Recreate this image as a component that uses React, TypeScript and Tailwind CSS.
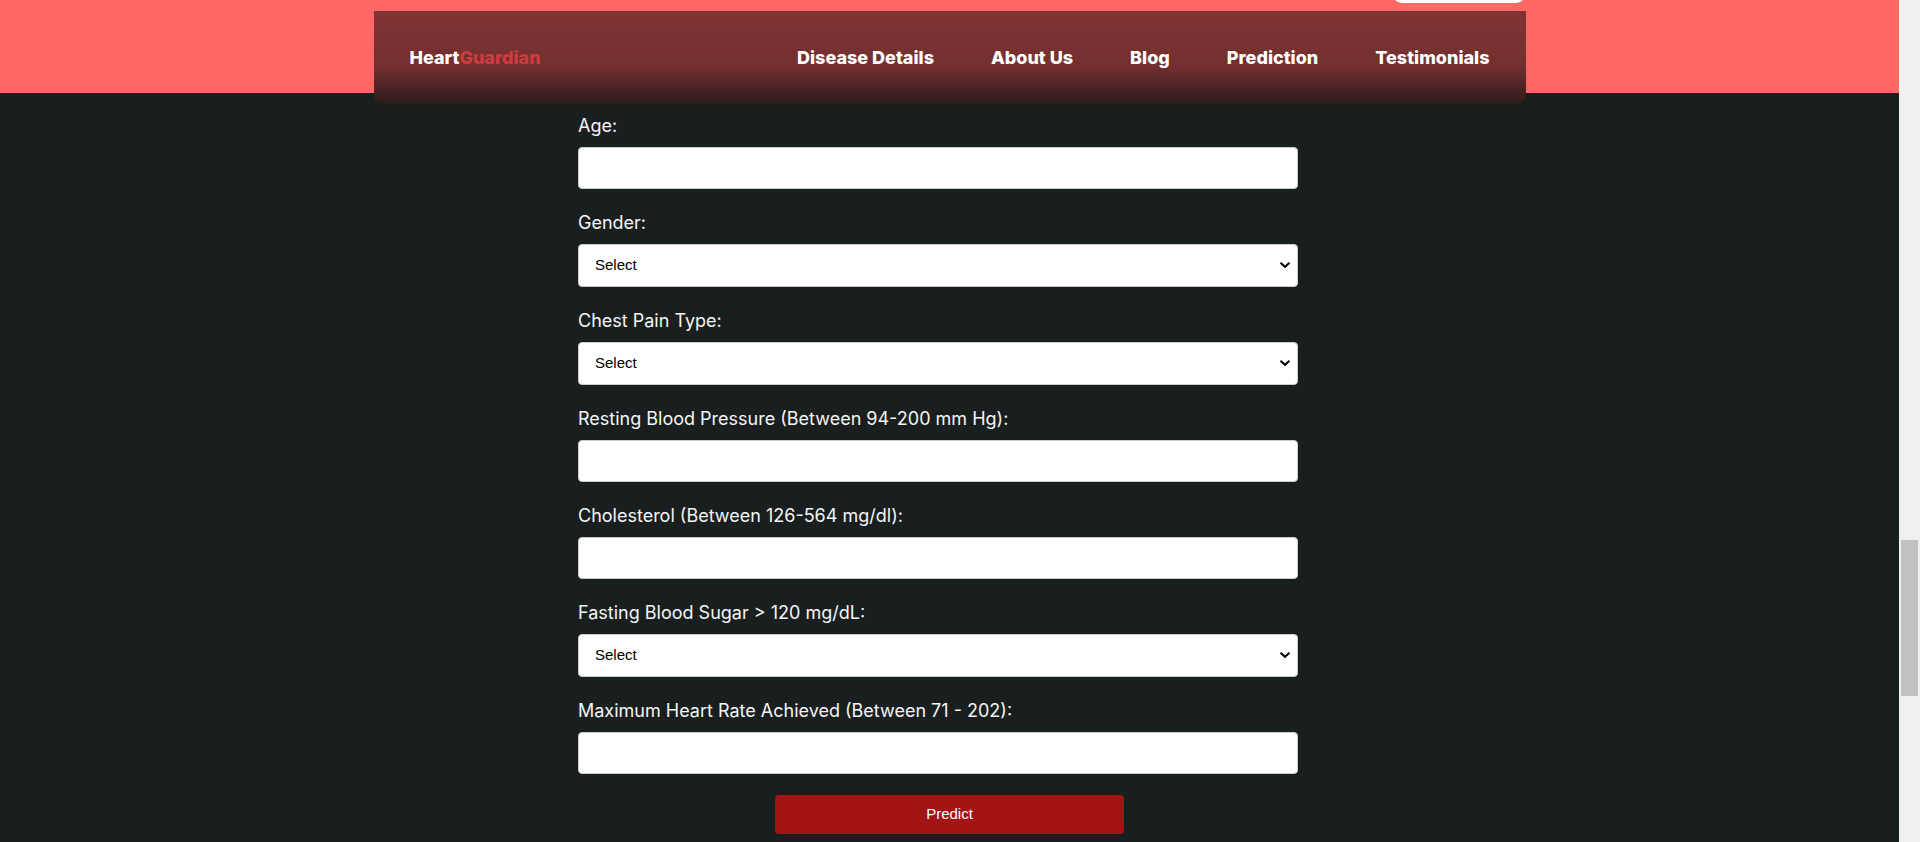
import React from "react";

type Field = { id: string; label: string; options?: string[] };

const links = ["Disease Details", "About Us", "Blog", "Prediction", "Testimonials"];

const fields: Field[] = [
  { id: "age", label: "Age:" },
  { id: "gender", label: "Gender:", options: ["Male", "Female"] },
  {
    id: "chest-pain",
    label: "Chest Pain Type:",
    options: ["Typical Angina", "Atypical Angina", "Non-anginal Pain", "Asymptomatic"],
  },
  { id: "blood-pressure", label: "Resting Blood Pressure (Between 94-200 mm Hg):" },
  { id: "cholesterol", label: "Cholesterol (Between 126-564 mg/dl):" },
  { id: "blood-sugar", label: "Fasting Blood Sugar > 120 mg/dL:", options: ["Yes", "No"] },
  { id: "heart-rate", label: "Maximum Heart Rate Achieved (Between 71 - 202):" },
];

function NavBar() {
  return (
    <nav className="absolute inset-x-0 top-[11px] z-10 mx-auto flex h-[93px] w-full max-w-[1152px] items-center justify-between rounded-b-[10px] bg-linear-to-b from-[#803333] via-[#732f2f] via-60% to-[#2d1b1b] px-9 text-lg font-extrabold text-white">
      <a href="#home">
        Heart<span className="text-[#cc3c3f]">Guardian</span>
      </a>
      <ul className="flex gap-[57px]">
        {links.map((name) => (
          <li key={name}>
            <a href={"#" + name.toLowerCase().replace(" ", "-")}>{name}</a>
          </li>
        ))}
      </ul>
    </nav>
  );
}

function FormField({ id, label, options }: Field) {
  return (
    <div className="flex flex-col gap-2">
      <label htmlFor={id} className="text-lg leading-[27px] text-[#f5f5f5]">
        {label}
      </label>
      {options ? (
        <div className="relative">
          <select
            id={id}
            defaultValue=""
            className="block h-[43px] w-full appearance-none rounded border border-[#cccccc] bg-white px-4 font-['Liberation_Sans',sans-serif] text-[15px] text-black"
          >
            <option value="">Select</option>
            {options.map((o) => (
              <option key={o}>{o}</option>
            ))}
          </select>
          <svg
            viewBox="0 0 12 8"
            className="pointer-events-none absolute top-[17px] right-[7px] h-2 w-3"
            fill="none"
            stroke="black"
            strokeWidth="2"
          >
            <path d="M1.500 1.800 6 5.800l4.500-4" />
          </svg>
        </div>
      ) : (
        <input
          id={id}
          type="text"
          className="h-[42px] rounded border border-[#cccccc] bg-white px-4 font-['Liberation_Sans',sans-serif] text-[15px] text-black"
        />
      )}
    </div>
  );
}

export default function App() {
  return (
    <div className="flex min-h-screen bg-[#191f1f] font-['Inter',sans-serif]">
      <div className="relative flex min-w-0 flex-1 flex-col">
        <header className="h-[93px] overflow-hidden bg-[#ff6865]">
          <div className="mx-auto flex max-w-[1152px] justify-end">
            <div className="-mt-[37px] h-10 w-[134px] rounded-[10px] bg-white" />
          </div>
        </header>
        <NavBar />
        <form className="mx-auto w-full max-w-[791px] grow px-6 pt-[19px] shadow-[0_0_10px_rgba(0,0,0,0.1)]">
          <div className="flex max-w-[720px] flex-col gap-5">
            {fields.map((f) => (
              <FormField key={f.id} {...f} />
            ))}
          </div>
          <button
            type="button"
            className="mx-auto mt-[21px] block h-[39px] w-[349px] rounded bg-[#a31414] font-['Liberation_Sans',sans-serif] text-[15px] text-white"
          >
            Predict
          </button>
        </form>
      </div>
      <div className="flex w-[21px] flex-col bg-[#f0f0f0] px-0.5">
        <div className="grow-[540]" />
        <div className="grow-[156] bg-[#c1c1c1]" />
        <div className="grow-[146]" />
      </div>
    </div>
  );
}
